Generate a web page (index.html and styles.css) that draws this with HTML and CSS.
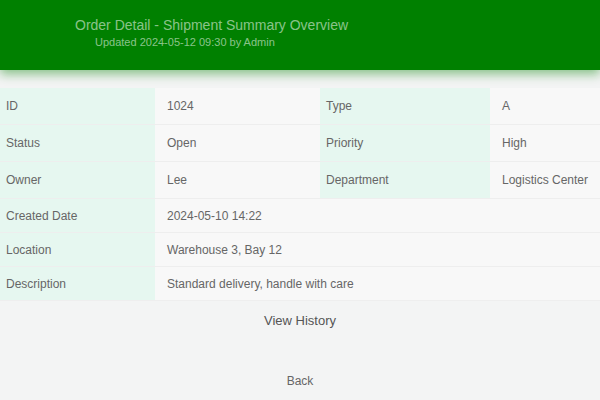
FILE: index.html
```html
<!DOCTYPE html>
<html lang="en">
<head>
    <meta charset="UTF-8">
    <title>Order Detail</title>
    <link rel="stylesheet" href="styles.css">
</head>
<body>
<div class="header">
    <div class="title">Order Detail - Shipment Summary Overview</div>
    <div class="subtitle">Updated 2024-05-12 09:30 by Admin</div>
</div>
<table class="detail">
    <colgroup>
        <col class="c-label">
        <col class="c-value">
        <col class="c-label2">
        <col>
    </colgroup>
    <tr>
        <th>ID</th>
        <td>1024</td>
        <th>Type</th>
        <td>A</td>
    </tr>
    <tr>
        <th>Status</th>
        <td>Open</td>
        <th>Priority</th>
        <td>High</td>
    </tr>
    <tr>
        <th>Owner</th>
        <td>Lee</td>
        <th>Department</th>
        <td>Logistics Center</td>
    </tr>
    <tr class="wide">
        <th>Created Date</th>
        <td colspan="3">2024-05-10 14:22</td>
    </tr>
    <tr class="wide">
        <th>Location</th>
        <td colspan="3">Warehouse 3, Bay 12</td>
    </tr>
    <tr class="wide">
        <th>Description</th>
        <td colspan="3">Standard delivery, handle with care</td>
    </tr>
</table>
<div class="actions">
    <p class="more">View History</p>
    <p class="back">Back</p>
</div>
</body>
</html>
```

FILE: styles.css
```css
html, body {
    margin: 0;
    padding: 0;
}

body {
    background: #f3f4f4;
    font-family: "Liberation Sans", Arial, sans-serif;
    font-size: 12px;
    color: #666;
}

.header {
    height: 70px;
    background: #008000;
    padding: 16px 0 0 75px;
    box-sizing: border-box;
    box-shadow: 0 4px 10px rgba(0, 128, 0, .45);
    color: rgba(255, 255, 255, .55);
}

.title {
    font-size: 14px;
    line-height: 18px;
}

.subtitle {
    font-size: 11px;
    line-height: 16px;
    padding-left: 20px;
}

.detail {
    width: 100%;
    margin-top: 18px;
    border-collapse: collapse;
    table-layout: fixed;
}

.c-label {
    width: 155px;
}

.c-value {
    width: 165px;
}

.c-label2 {
    width: 170px;
}

.detail th,
.detail td {
    height: 36px;
    padding: 0 6px;
    text-align: left;
    font-weight: normal;
    white-space: nowrap;
    overflow: hidden;
    border-bottom: 1px solid #eee;
}

.detail tr.wide th,
.detail tr.wide td {
    height: 33px;
}

.detail th {
    background: #e6f7f0;
}

.detail td {
    background: #f8f8f8;
    padding-left: 12px;
}

.actions {
    text-align: center;
}

.more {
    margin: 12px 0 0;
    font-size: 13px;
    color: #555;
}

.back {
    margin: 46px 0 0;
    font-size: 12px;
}
```
